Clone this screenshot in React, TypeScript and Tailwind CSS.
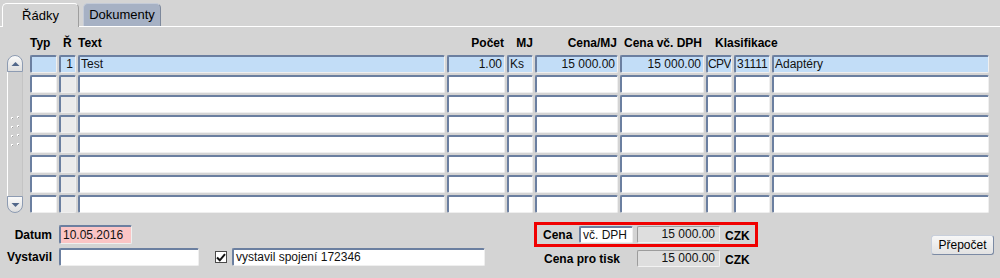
import React from "react";

const cellBase =
  "h-[18px] shrink-0 overflow-hidden whitespace-nowrap rounded-[2px] border-t-2 border-l-2 border-r border-b border-t-[#6b7fa0] border-l-[#6b7fa0] border-r-[#efefef] border-b-[#efefef] text-[12px] leading-[15px] text-[#111]";

const colW = [
  "w-[27px]",
  "w-[17px]",
  "w-[367px]",
  "w-[58px]",
  "w-[26px]",
  "w-[83px]",
  "w-[84px]",
  "w-[26px]",
  "w-[36px]",
  "w-[217px]",
];

const align = ["l", "r", "l", "r", "l", "r", "r", "t", "l", "l"];

const firstRow = ["", "1", "Test", "1.00", "Ks", "15 000.00", "15 000.00", "CPV", "31111", "Adaptéry"];

function Row({ data, selected }: { data?: string[]; selected?: boolean }) {
  return (
    <div className="flex gap-[2px]">
      {colW.map((w, i) => {
        const bg = selected ? "bg-[#c2ddf7]" : i === 1 ? "bg-[#ebebeb]" : "bg-white";
        const al =
          align[i] === "r"
            ? "text-right pr-[2px]"
            : align[i] === "t"
            ? "text-left pl-0 tracking-[-0.6px]"
            : "text-left pl-[1px]";
        return (
          <div key={i} className={`${cellBase} ${w} ${bg} ${al}`}>
            {data ? data[i] : ""}
          </div>
        );
      })}
    </div>
  );
}

function ScrollBar() {
  return (
    <div className="flex h-[158px] w-[16px] flex-col">
      <div className="flex h-[17px] items-center justify-center rounded-t-[8px] border border-[#8d9bb2] bg-gradient-to-b from-[#fafafa] to-[#dedede]">
        <svg width="9" height="6" viewBox="0 0 9 6">
          <path d="M0.5 5 L4.5 1 L8.5 5 Z" fill="#52678a" />
        </svg>
      </div>
      <div className="flex flex-1 items-center justify-center border-l border-l-white border-r border-r-[#c4c4c4] bg-[#d0d0d0]">
        <svg width="10" height="36" viewBox="0 0 10 36">
          {[0, 1, 2, 3].map((k) => (
            <g key={k}>
              <rect x="1" y={1 + k * 9} width="2" height="2" fill="#ffffff" />
              <rect x="7" y={k * 9} width="2" height="2" fill="#ffffff" />
              <rect x="2" y={2 + k * 9} width="1" height="1" fill="#a0a0a0" />
              <rect x="8" y={1 + k * 9} width="1" height="1" fill="#a0a0a0" />
            </g>
          ))}
        </svg>
      </div>
      <div className="flex h-[17px] items-center justify-center rounded-b-[8px] border border-[#8d9bb2] bg-gradient-to-b from-[#fafafa] to-[#dedede]">
        <svg width="9" height="6" viewBox="0 0 9 6">
          <path d="M0.5 1 L4.5 5 L8.5 1 Z" fill="#52678a" />
        </svg>
      </div>
    </div>
  );
}

const inputCls =
  "rounded-[2px] border-t-2 border-l-2 border-r border-b border-t-[#6b7fa0] border-l-[#6b7fa0] border-r-[#efefef] border-b-[#efefef] text-[12px] leading-[14px] text-[#111] pl-[2px] whitespace-nowrap overflow-hidden";

const roCls =
  "rounded-[2px] border-t border-l border-r border-b border-t-[#9c9c9c] border-l-[#9c9c9c] border-r-[#f2f2f2] border-b-[#f2f2f2] bg-[#dedede] text-[12px] leading-[15px] text-[#111] text-right pr-[4px]";

export default function App() {
  return (
    <div className="h-[278px] w-[1000px] overflow-hidden bg-[#d4d4d4] font-['Liberation_Sans',Arial,sans-serif] text-[12px] text-black">
      {/* Tabs */}
      <div className="flex h-[27px] items-end border-b border-b-white pl-[2px] pt-[3px]">
        <div className="relative -mb-px flex h-[24px] w-[77px] items-center justify-center rounded-t-[5px] border-t border-l border-r border-t-white border-l-white border-r-[#9e9e9e] bg-[#d4d4d4] text-[13px]">
          Řádky
        </div>
        <div className="ml-[4px] flex h-[23px] w-[78px] items-center justify-center rounded-t-[5px] border-t border-l border-r border-t-[#c4cbd8] border-l-[#c4cbd8] border-r-[#7d889b] bg-[#a6b1c4] text-[13px]">
          Dokumenty
        </div>
      </div>

      {/* Header */}
      <div className="mt-[9px] flex h-[15px] pl-[30px] text-[12px] font-bold leading-[15px]">
        <div className="flex gap-[2px]">
          <div className="w-[27px]">Typ</div>
          <div className="w-[17px] pl-[4px]">Ř</div>
          <div className="w-[367px]">Text</div>
          <div className="w-[58px] pr-[1px] text-right">Počet</div>
          <div className="w-[26px] text-right">MJ</div>
          <div className="w-[83px] pr-[1px] text-right">Cena/MJ</div>
          <div className="w-[84px] pr-[2px] text-right">Cena vč. DPH</div>
          <div className="w-[200px] pl-[9px]">Klasifikace</div>
        </div>
      </div>

      {/* Grid */}
      <div className="mt-[4px] flex pl-[7px]">
        <ScrollBar />
        <div className="ml-[7px] flex flex-col gap-[2px]">
          <Row data={firstRow} selected />
          {[0, 1, 2, 3, 4, 5, 6].map((k) => (
            <Row key={k} />
          ))}
        </div>
      </div>

      {/* Bottom form */}
      <div className="flex">
        <div className="flex w-[485px] flex-col pt-[12px]">
          <div className="flex h-[19px] items-center">
            <div className="w-[52px] text-right font-bold">Datum</div>
            <div className={`${inputCls} ml-[7px] h-[19px] w-[73px] bg-[#fbc5c5] leading-[16px]`}>10.05.2016</div>
          </div>
          <div className="mt-[4px] flex h-[18px] items-center">
            <div className="w-[52px] text-right font-bold">Vystavil</div>
            <div className={`${inputCls} ml-[7px] h-[18px] w-[140px] bg-white`}></div>
            <div className="ml-[16px] flex h-[12px] w-[12px] items-center justify-center border border-[#4a4a4a] bg-white">
              <svg width="10" height="9" viewBox="0 0 10 9">
                <path d="M1 4.5 L3.8 7.3 L9 1.2" stroke="#111" strokeWidth="2" fill="none" />
              </svg>
            </div>
            <div className={`${inputCls} ml-[5px] h-[18px] w-[253px] bg-white`}>vystavil spojení 172346</div>
          </div>
        </div>

        <div className="ml-[49px] flex flex-col pt-[9px]">
          <div className="flex h-[25px] w-[224px] items-center border-[3px] border-[#f00000] pl-[6px]">
            <div className="w-[36px] font-bold">Cena</div>
            <div className={`${inputCls} h-[17px] w-[54px] bg-white`}>vč. DPH</div>
            <div className={`${roCls} ml-[4px] h-[17px] w-[83px]`}>15 000.00</div>
            <div className="ml-[5px] mt-[3px] font-bold">CZK</div>
          </div>
          <div className="mt-[3px] flex h-[17px] items-center">
            <div className="w-[103px] pl-[10px] font-bold">Cena pro tisk</div>
            <div className={`${roCls} h-[17px] w-[83px]`}>15 000.00</div>
            <div className="ml-[5px] mt-[3px] font-bold">CZK</div>
          </div>
        </div>

        <div className="ml-[173px] pt-[22px]">
          <div className="flex h-[20px] w-[63px] items-center justify-center rounded-[3px] border border-t-[#c8cfdb] border-l-[#c8cfdb] border-r-[#7b8aa4] border-b-[#7b8aa4] bg-gradient-to-b from-[#f7f7f7] to-[#e2e2e2] text-[12px]">
            Přepočet
          </div>
        </div>
      </div>
    </div>
  );
}
